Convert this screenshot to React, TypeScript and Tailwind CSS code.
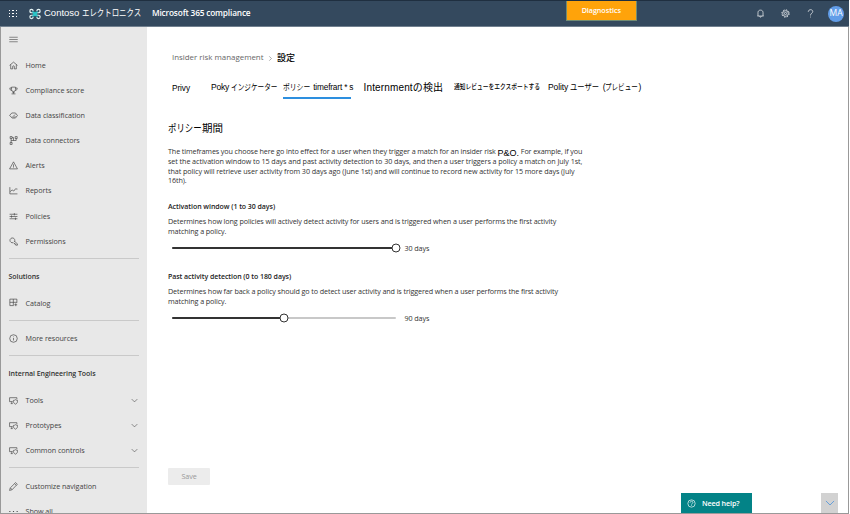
import type { ReactNode } from "react";

const paths: Record<string, ReactNode> = {
  home: <path d="M1 7.800 8 2l7 5.800M3 6.500v7.500h3.500v-4a1.500 1.500 0 0 1 3 0v4H13V6.500" />,
  trophy: <path d="M4.500 2h7v4.500a3.500 3.500 0 0 1-7 0zM4.500 3.500h-3c0 3 1 4.500 3.500 4.500M11.500 3.500h3c0 3-1 4.500-3.500 4.500M8 10v3.500M4.500 14h7M6 11.800h4" />,
  tag: <path d="M5 3.500h6.500L15 8l-3.500 4.500H6L1 8zM5 12l5.500-5.500M8 12.500l3.500-3.500M10.500 6.500h.5" />,
  connectors: <path d="M2 1h3.500v3.500H2zM11 1h3.500v3.500H11zM2 11.500h3.500V15H2zM3.750 4.500v7M5.500 2.800H8V8M12.700 4.500V8H3.750" />,
  alert: <path d="M8 1.500 15 14H1zM8 6v4.500M8 11.500v1" />,
  chart: <path d="M1.500 2v12h13.500M2 10l3.500-3 3 2 3-4 3.500 .5" />,
  sliders: <path d="M1 4h14M1 8h14M1 12h14M9.500 2v4M4.500 6v4M11.500 10v4" />,
  key: <path d="M9.500 8.500a4.300 4.300 0 1 0-2 1.500L9 11.500h1.500V13H12v1.500h3V12.500L9.500 7M4.500 4.500h.1" />,
  catalog: <path d="M1.500 2H14v6.500M1.500 2v11.500H8M7.700 2v11.500M1.500 7.700H14M12 9.500v5M9.500 12h5" />,
  info: <><circle cx="8" cy="8" r="6.700" /><path d="M8 7v4.500M8 4.500V5.500" /></>,
  tools: <path d="M6.500 10H1V3h13v3M3 13.500h3.500M5 10v3.500M11.500 6.500c1 1 2.200 1.300 3.700 1.300 0 3.500-.7 5.500-3.700 6.700-3-1.200-3.700-3.200-3.700-6.700 1.500 0 2.700-.3 3.700-1.300z" />,
  pencil: <path d="m1 15 1.200-4.500L11.800 1l3 3-9.300 9.700zM10 3l3 3M2.500 10.500l3 3" />,
  dots: <path d="M0.500 8H2.500M7 8h2M13.500 8h2" strokeWidth="1.700" />,
  menu: <path d="M0.500 4h15M0.500 8h15M0.500 12h15" />,
  bell: <path d="M3.500 12.500V6.500C3.500 4 5 2 8 2s4.500 2 4.500 4.500v6M2.500 12.500h11M6.500 13c0 2 3 2 3 0" />,
  gear: <><circle cx="8" cy="8" r="2" /><circle cx="8" cy="8" r="5" /><circle cx="8" cy="8" r="6.500" strokeDasharray="2.550 2.550" strokeWidth="1.500" /></>,
  question: <path d="M4 5c0-5 8-5 8-.5C12 7.500 8 7.500 8 11.500M8 13.500V15" />,
  help: <><circle cx="8" cy="8" r="6.500" /><path d="M5.500 6.500c0-3.300 5-3.300 5-.3C10.500 8 8 8 8 10M8 11v1.200" /></>,
  down: <path d="m1.500 4.700 6.500 6.500 6.500-6.500" />,
  right: <path d="m4 1 7 7-7 7" strokeWidth="2" />,
};

function Icon({ name, className }: { name: string; className: string }) {
  return (
    <svg viewBox="0 0 16 16" fill="none" stroke="currentColor" strokeWidth="1.200" className={`shrink-0 ${className}`}>
      {paths[name]}
    </svg>
  );
}

/** Horizontally condensed Japanese text. */
function Kana({ className, children }: { className: string; children: ReactNode }) {
  return <span className={`inline-block origin-left whitespace-nowrap tracking-normal ${className}`}>{children}</span>;
}

function NavItem({ icon, label, expandable }: { icon: string; label: string; expandable?: boolean }) {
  return (
    <div className="flex h-[25.150px] shrink-0 items-center pr-[9px] text-[7.200px] tracking-[-0.050px] text-[#444]">
      <Icon name={icon} className="mr-[8px] h-[9px] w-[9px] text-[#444]" />
      <span className="flex-1 whitespace-nowrap">{label}</span>
      {expandable && <Icon name="down" className="h-[7px] w-[7px] text-[#333]" />}
    </div>
  );
}

function Divider() {
  return <div className="mr-[8px] h-px shrink-0 bg-[#c9c9c9]" />;
}

function NavHeading({ children }: { children: ReactNode }) {
  return (
    <div className="flex h-[26px] shrink-0 items-center whitespace-nowrap text-[7px] font-semibold tracking-[-0.050px] text-[#333]">
      {children}
    </div>
  );
}

function Sidebar() {
  return (
    <nav className="flex w-[147px] shrink-0 flex-col overflow-hidden border-l border-[#999] bg-[#e8e8e8] pl-[7.500px]">
      <div className="flex h-[25.600px] shrink-0 items-center text-[#555]">
        <Icon name="menu" className="h-[9px] w-[9px]" />
      </div>
      <NavItem icon="home" label="Home" />
      <NavItem icon="trophy" label="Compliance score" />
      <NavItem icon="tag" label="Data classification" />
      <NavItem icon="connectors" label="Data connectors" />
      <NavItem icon="alert" label="Alerts" />
      <NavItem icon="chart" label="Reports" />
      <NavItem icon="sliders" label="Policies" />
      <NavItem icon="key" label="Permissions" />
      <div className="h-[4.200px] shrink-0" />
      <Divider />
      <div className="h-[5.500px] shrink-0" />
      <NavHeading>Solutions</NavHeading>
      <NavItem icon="catalog" label="Catalog" />
      <div className="h-[4px] shrink-0" />
      <Divider />
      <div className="h-[5.500px] shrink-0" />
      <NavItem icon="info" label="More resources" />
      <div className="h-[4px] shrink-0" />
      <Divider />
      <div className="h-[5.500px] shrink-0" />
      <NavHeading>Internal Engineering Tools</NavHeading>
      <NavItem icon="tools" label="Tools" expandable />
      <NavItem icon="tools" label="Prototypes" expandable />
      <NavItem icon="tools" label="Common controls" expandable />
      <div className="h-[3.500px] shrink-0" />
      <Divider />
      <div className="h-[6px] shrink-0" />
      <NavItem icon="pencil" label="Customize navigation" />
      <NavItem icon="dots" label="Show all" />
    </nav>
  );
}

function Slider({ value, max, label }: { value: number; max: number; label: string }) {
  const percent = `${(value / max) * 100}%`;
  return (
    <div className="ml-[4px] flex h-[10px] items-center">
      <div className="relative h-[2px] w-[224px] rounded-full bg-[#c8c8c8]">
        <div className="h-full rounded-full bg-[#333]" style={{ width: percent }} />
        <div
          className="absolute top-1/2 h-[9px] w-[9px] -translate-x-1/2 -translate-y-1/2 rounded-full border-[1.500px] border-[#333] bg-white"
          style={{ left: percent }}
        />
      </div>
      <span className="ml-[8.500px] mt-px whitespace-nowrap text-[7.200px] text-[#333]">{label}</span>
    </div>
  );
}

function Header() {
  return (
    <header className="flex h-[27px] shrink-0 border-b border-t border-b-[#71808f] border-t-[#1f2f40] bg-[#34495e] text-white">
      <div className="flex h-[25px] w-[566px] items-center">
        <div className="ml-[9px] grid w-[8px] grid-cols-3 gap-[2px]">
          {Array.from({ length: 9 }, (_, i) => (
            <span key={i} className="h-[1.300px] w-[1.300px] bg-white" />
          ))}
        </div>
        <svg viewBox="0 0 24 24" fill="none" strokeWidth="2.400" className="ml-[12px] h-[12px] w-[12px]">
          <path stroke="#e4f3f4" d="M8 9.500H5A3.300 3.300 0 1 1 8.300 6M16 9.500h3A3.300 3.300 0 1 0 15.700 6M8 14.500H5A3.300 3.300 0 1 0 8.300 18M16 14.500h3a3.300 3.300 0 1 1-3.300 3.500" />
          <path stroke="#2cc5c8" strokeWidth="3" d="m7 7 10 10M17 7 7 17" />
          <path fill="#2cc5c8" d="m12 7 5 5-5 5-5-5z" />
        </svg>
        <span className="ml-[3px] w-[108px] whitespace-nowrap font-['Liberation_Sans','Noto_Sans_CJK_JP',sans-serif] text-[9.500px]">
          Contoso <Kana className="w-[60px] scale-x-[0.780]">エレクトロニクス</Kana>
        </span>
        <span className="whitespace-nowrap text-[8.300px] font-semibold tracking-[-0.170px]">Microsoft 365 compliance</span>
      </div>
      <div className="flex h-[20px] w-[70.500px] items-center justify-center border border-t-0 border-[#718b73] bg-[#ffa30a] text-[7.200px] font-semibold tracking-[-0.050px]">
        Diagnostics
      </div>
      <div className="flex h-[25px] flex-1 items-center justify-end pr-[5px]">
        <Icon name="bell" className="mr-[16px] h-[9px] w-[9px]" />
        <Icon name="gear" className="mr-[16px] h-[9px] w-[9px]" />
        <Icon name="question" className="mr-[13px] h-[9px] w-[9px]" />
        <div className="flex h-[16px] w-[16px] items-center justify-center rounded-full bg-[#629de8] text-[8.500px]">MA</div>
      </div>
    </header>
  );
}

function Tabs() {
  return (
    <div className="mt-[13px] flex h-[23px] whitespace-nowrap font-['Liberation_Sans','Noto_Sans_CJK_JP',sans-serif] leading-[20px] text-black">
      <span className="ml-[4px] w-[39px] pt-px text-[8.300px]">Privy</span>
      <span className="w-[72px] text-[8.500px] tracking-[-0.200px]">
        Poky <Kana className="w-[46px] scale-x-[0.780]">インジケーター</Kana>
      </span>
      <span className="h-[22px] w-[68px] border-b-2 border-[#2d8fdf] text-[8.300px] tracking-[-0.170px]">
        <Kana className="w-[28px] scale-x-[0.820]">ポリシー</Kana> timefrart * s
      </span>
      <span className="ml-[12.500px] w-[90.500px] pt-px text-[10px] tracking-[0.150px]">Internmentの検出</span>
      <span className="w-[94px] text-[7px] font-medium">
        <Kana className="w-[86px] scale-x-[0.820]">通知レビューをエクスポートする</Kana>
      </span>
      <span className="text-[8.500px]">
        Polity <Kana className="w-[30px] scale-x-[0.860]">ユーザー</Kana> (<Kana className="w-[33px] scale-x-[0.770]">プレビュー</Kana>)
      </span>
    </div>
  );
}

function Settings() {
  return (
    <main className="flex min-w-0 flex-1 flex-col border-r border-[#999] bg-white pl-[21px] text-[7.200px] tracking-[-0.103px] text-[#333]">
      <div className="ml-[4px] mt-[25px] flex h-[12px] items-center whitespace-nowrap tracking-normal">
        <span className="w-[96px] text-[7.900px] text-[#666]">Insider risk management</span>
        <Icon name="right" className="mr-[4px] h-[5px] w-[5px] text-[#777]" />
        <span className="font-['Noto_Sans_CJK_JP',sans-serif] text-[9px] font-medium text-black">設定</span>
      </div>
      <Tabs />
      <h1 className="mt-[21px] h-[14px] whitespace-nowrap font-['Noto_Sans_CJK_JP',sans-serif] text-[10.500px] leading-[14px] tracking-normal text-black">
        <Kana className="w-[34px] scale-x-[0.800]">ポリシー</Kana>期間
      </h1>
      <div className="mt-[12px] h-[39px] whitespace-nowrap leading-[9.750px]">
        <p className="h-[9.750px] tracking-[-0.120px]">
          The timeframes you choose here go into effect for a user when they trigger a match for an insider risk{" "}
          <span className="relative top-[1.500px] font-['Liberation_Sans',sans-serif] text-[9px] tracking-[0.030px] text-black">P&amp;O.</span> For example, if you
        </p>
        <p className="tracking-[-0.080px]">set the activation window to 15 days and past activity detection to 30 days, and then a user triggers a policy a match on July 1st,</p>
        <p className="tracking-[-0.080px]">that policy will retrieve user activity from 30 days ago (June 1st) and will continue to record new activity for 15 more days (July</p>
        <p>16th).</p>
      </div>
      <section className="mt-[16px] h-[70px]">
        <h2 className="h-[10px] text-[7px] font-semibold leading-[10px] tracking-[-0.050px] text-[#222]">Activation window (1 to 30 days)</h2>
        <p className="mb-[6px] mt-[5px] whitespace-nowrap leading-[9.750px]">
          Determines how long policies will actively detect activity for users and is triggered when a user performs the first activity
          <br />
          matching a policy.
        </p>
        <Slider value={30} max={30} label="30 days" />
      </section>
      <section className="h-[70px]">
        <h2 className="h-[10px] text-[7px] font-semibold leading-[10px] tracking-[-0.050px] text-[#222]">Past activity detection (0 to 180 days)</h2>
        <p className="mb-[6px] mt-[5px] whitespace-nowrap leading-[9.750px]">
          Determines how far back a policy should go to detect user activity and is triggered when a user performs the first activity
          <br />
          matching a policy.
        </p>
        <Slider value={90} max={180} label="90 days" />
      </section>
      <button className="mb-[8px] mt-auto h-[17px] w-[42px] shrink-0 rounded-[1px] bg-[#ececec] text-[7.200px] text-[#999]">Save</button>
      <footer className="ml-[513px] flex h-[20px] shrink-0 items-stretch">
        <button className="flex w-[71px] shrink-0 items-center bg-[#038387] pl-[6px] text-white">
          <Icon name="help" className="mr-[6px] h-[9px] w-[9px]" />
          <span className="whitespace-nowrap font-semibold tracking-[-0.130px]">Need help?</span>
        </button>
        <button className="ml-[69px] flex w-[17px] shrink-0 items-center justify-center bg-[#d2d2d2] text-[#438fdc]">
          <Icon name="down" className="h-[10px] w-[10px]" />
        </button>
      </footer>
    </main>
  );
}

export default function App() {
  return (
    <div className="flex h-[514px] w-[849px] flex-col overflow-hidden border-b border-[#999] font-['Open_Sans','Noto_Sans_CJK_JP',sans-serif]">
      <Header />
      <div className="flex min-h-0 flex-1">
        <Sidebar />
        <Settings />
      </div>
    </div>
  );
}
